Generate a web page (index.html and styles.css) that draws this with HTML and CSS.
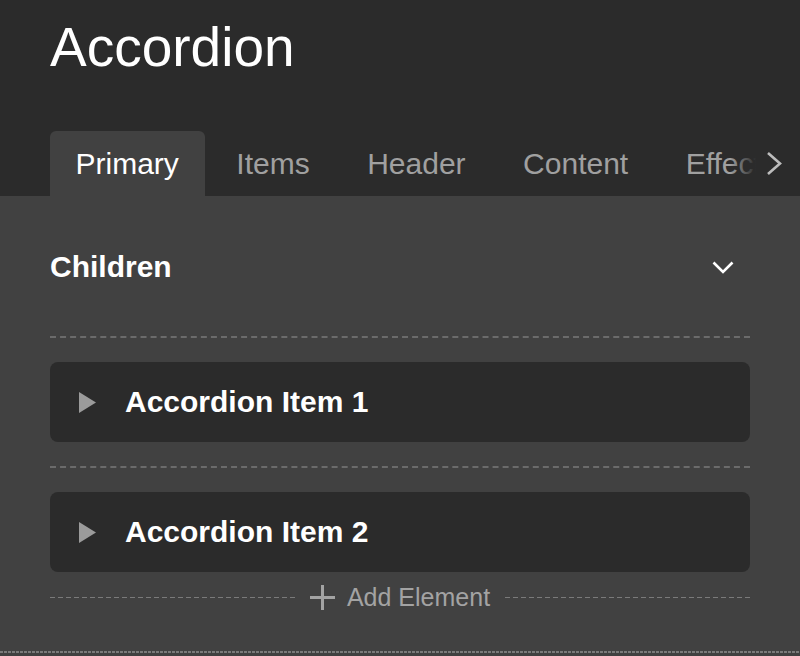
FILE: index.html
```html
<!DOCTYPE html>
<html>
<head>
<meta charset="utf-8">
<link rel="stylesheet" href="styles.css">
</head>
<body>
<div class="header">
  <h1 class="title">Accordion</h1>
  <div class="tabs">
    <div class="tab active">Primary</div>
    <div class="tab">Items</div>
    <div class="tab">Header</div>
    <div class="tab">Content</div>
    <div class="tab">Effects</div>
    <div class="tabs-more">
      <svg class="chev-right" width="16" height="25" viewBox="0 0 16 25"><polyline points="2,2 14,12.5 2,23" fill="none" stroke="#bdbdbd" stroke-width="2.6"/></svg>
    </div>
  </div>
</div>
<div class="content">
  <div class="section-head">
    <span class="section-title">Children</span>
    <svg class="chev-down" width="22" height="13" viewBox="0 0 22 13"><polyline points="1.5,1.5 11,11 20.5,1.5" fill="none" stroke="#ffffff" stroke-width="2.6"/></svg>
  </div>
  <div class="dash first"></div>
  <div class="item">
    <svg class="tri" width="17" height="21" viewBox="0 0 17 21"><polygon points="0,0 17,10.5 0,21" fill="#9b9b9b"/></svg>
    <span class="item-label">Accordion Item 1</span>
  </div>
  <div class="dash"></div>
  <div class="item">
    <svg class="tri" width="17" height="21" viewBox="0 0 17 21"><polygon points="0,0 17,10.5 0,21" fill="#9b9b9b"/></svg>
    <span class="item-label">Accordion Item 2</span>
  </div>
  <div class="add-row">
    <div class="add-line left"></div>
    <svg class="plus" width="25" height="25" viewBox="0 0 25 25"><path d="M12.5 0 V25 M0 12.5 H25" stroke="#a3a3a3" stroke-width="3" fill="none"/></svg>
    <span class="add-label">Add Element</span>
    <div class="add-line right"></div>
  </div>
</div>
<div class="dotted"></div>
</body>
</html>
```
FILE: styles.css
```css
html, body {
  margin: 0;
  padding: 0;
  background: #414141;
  font-family: "Liberation Sans", Arial, sans-serif;
  overflow: hidden;
}

.header {
  background: #2b2b2b;
  padding: 20px 0 0 50px;
}

.title {
  margin: 0;
  font-size: 55px;
  line-height: 55px;
  font-weight: normal;
  color: #ffffff;
}

.tabs {
  margin-top: 56px;
  display: flex;
  gap: 6px;
  height: 65px;
  position: relative;
  overflow: hidden;
}

.tab {
  padding: 0 26px 0 25.5px;
  line-height: 65px;
  font-size: 30px;
  color: #a0a0a0;
  white-space: nowrap;
  border-radius: 6px 6px 0 0;
  flex: none;
}

.tab.active {
  background: #414141;
  color: #ffffff;
}

.tabs-more {
  position: absolute;
  right: 0;
  top: 0;
  width: 70px;
  height: 65px;
  background: linear-gradient(to right, rgba(43,43,43,0) 0, #2b2b2b 26px);
  display: flex;
  align-items: center;
  justify-content: flex-end;
  padding-right: 18px;
  box-sizing: border-box;
}

.chev-right {
  display: block;
}

.content {
  padding: 56px 50px 0 50px;
}

.section-head {
  display: flex;
  justify-content: space-between;
  align-items: center;
  height: 30px;
}

.section-title {
  font-size: 30px;
  line-height: 30px;
  font-weight: bold;
  color: #ffffff;
}

.chev-down {
  display: block;
  margin-right: 16px;
}

.dash {
  border-top: 2px dashed #6b6b6b;
  margin: 24px 0;
}

.dash.first {
  margin-top: 54px;
}

.item {
  height: 80px;
  background: #2b2b2b;
  border-radius: 8px;
  display: flex;
  align-items: center;
  padding-left: 29px;
}

.tri {
  display: block;
  flex: none;
}

.item-label {
  margin-left: 29px;
  font-size: 30px;
  font-weight: bold;
  color: #ffffff;
}

.add-row {
  margin-top: 12px;
  height: 26px;
  display: flex;
  align-items: center;
  gap: 12px;
}

.add-line {
  flex: 1;
  height: 1px;
  background-image: repeating-linear-gradient(to right, #7a7a7a 0 5px, transparent 5px 8px);
}

.add-line.right {
  background-image: repeating-linear-gradient(to left, #7a7a7a 0 5px, transparent 5px 8px);
}

.plus {
  display: block;
  flex: none;
}

.add-label {
  font-size: 25px;
  color: #a3a3a3;
}

.dotted {
  margin-top: 41px;
  height: 2px;
  background: repeating-linear-gradient(to right, #7a7a7a 0 3px, transparent 3px 4px);
}
```
